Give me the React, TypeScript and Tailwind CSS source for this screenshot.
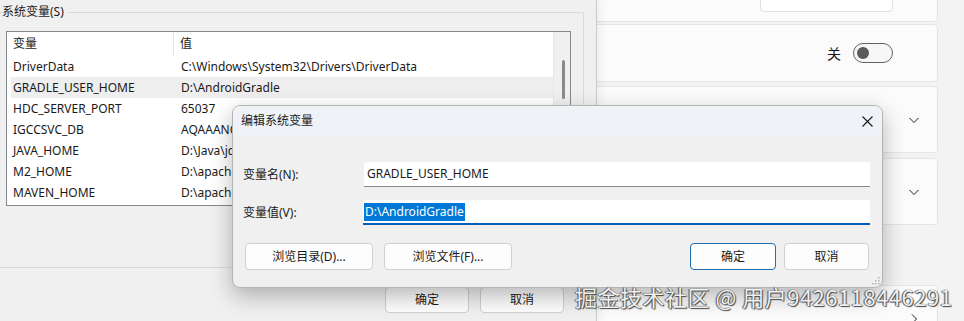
import React from 'react';

const rows = [
  { name: 'DriverData', value: 'C:\\Windows\\System32\\Drivers\\DriverData' },
  { name: 'GRADLE_USER_HOME', value: 'D:\\AndroidGradle', selected: true },
  { name: 'HDC_SERVER_PORT', value: '65037' },
  { name: 'IGCCSVC_DB', value: 'AQAAANCMnd8BFdERjHoAwE/Cl+sBAAAA' },
  { name: 'JAVA_HOME', value: 'D:\\Java\\jdk-17' },
  { name: 'M2_HOME', value: 'D:\\apache-maven-3.9.6' },
  { name: 'MAVEN_HOME', value: 'D:\\apache-maven-3.9.6' },
];

const Chevron: React.FC<{ dir?: 'down' | 'right' }> = ({ dir = 'down' }) => (
  <svg width="12" height="12" viewBox="0 0 12 12" fill="none" stroke="#1f1f1f" strokeWidth="1">
    {dir === 'down' ? <path d="M1.5 4 L6 8.5 L10.5 4" /> : <path d="M4 1.5 L8.5 6 L4 10.5" />}
  </svg>
);

// left: 环境变量 window (system variables group)
const EnvWindow: React.FC = () => (
  <div className="relative z-10 w-[597px] shrink-0 h-full bg-[#f0f0f0] border-r border-[#c9c9c9] shadow-[3px_0_8px_rgba(0,0,0,0.06)] flex flex-col">
    <fieldset className="ml-[-8px] mt-[4px] w-[592px] h-[264px] border-t border-r border-b border-[#dadada]">
      <legend className="ml-[10px] pr-[4px] leading-[16px] text-[#1a1a1a]">系统变量(S)</legend>
      <div className="mt-[11px] ml-[14px] w-[565px] h-[175px] border border-[#828790] bg-white flex">
        <div className="flex-1 flex flex-col">
          <div className="h-[24px] flex shrink-0">
            <div className="w-[167px] border-r border-[#e5e5e5] pl-[6px] flex items-center">变量</div>
            <div className="flex-1 pl-[6px] flex items-center">值</div>
          </div>
          {rows.map((r) => (
            <div
              key={r.name}
              className={`h-[21px] ml-[4px] flex items-center shrink-0 whitespace-nowrap overflow-hidden ${r.selected ? 'bg-[#eeeeee]' : ''}`}
            >
              <div className="w-[163px] pl-[2px] shrink-0">{r.name}</div>
              <div className="pl-[7px]">{r.value}</div>
            </div>
          ))}
        </div>
        <div className="w-[17px] bg-[#f0f0f0] border-l border-[#e8e8e8] pt-[28px] pl-[8px]">
          <div className="w-[3px] h-[39px] rounded-full bg-[#8a8a8a]" />
        </div>
      </div>
    </fieldset>
    <div className="mt-[19px] flex justify-end gap-[11px] pr-[32px]">
      <button className="w-[84px] h-[26px] rounded-[4px] border border-[#d0d0d0] bg-[#fdfdfd]">确定</button>
      <button className="w-[84px] h-[26px] rounded-[4px] border border-[#d0d0d0] bg-[#fdfdfd]">取消</button>
    </div>
  </div>
);

// right: settings app cards
const SettingsPane: React.FC = () => (
  <div className="flex-1 ml-[-12px] pr-[26px] flex flex-col text-[14px] text-[#1a1a1a]">
    <div className="mt-[-40px] h-[62px] shrink-0 rounded-[4px] border border-[#e5e5e5] bg-[#fbfbfb] flex items-start justify-end pr-[44px] pt-[19px]">
      <button className="w-[133px] h-[32px] rounded-[4px] border border-[#e0e0e0] bg-white text-[13px] flex items-start justify-center pt-[3px]">编辑环境变量</button>
    </div>
    <div className="mt-[2px] h-[58px] shrink-0 rounded-[4px] border border-[#e5e5e5] bg-[#fbfbfb] flex items-center justify-end pr-[44px] gap-[12px]">
      <span>关</span>
      <div className="w-[40px] h-[20px] rounded-full border border-[#616161] bg-[#f6f6f6] flex items-center pl-[3px]">
        <div className="w-[12px] h-[12px] rounded-full bg-[#5a5a5a]" />
      </div>
    </div>
    <div className="mt-[4px] h-[67px] shrink-0 rounded-[4px] border border-[#e5e5e5] bg-[#fbfbfb] flex items-center justify-end pr-[17px]">
      <Chevron />
    </div>
    <div className="mt-[5px] h-[67px] shrink-0 rounded-[4px] border border-[#e5e5e5] bg-[#fbfbfb] flex items-center justify-end pr-[17px]">
      <Chevron />
    </div>
    <div className="mt-[60px] h-[67px] shrink-0 rounded-[4px] border border-[#e5e5e5] bg-[#fbfbfb] flex items-center justify-end pr-[17px]">
      <Chevron dir="right" />
    </div>
  </div>
);

const EditDialog: React.FC = () => (
  <div className="absolute z-20 left-[232px] top-[105px] w-[651px] h-[183px] rounded-[8px] border border-[#b4b4b4] bg-[#f0f0f0] overflow-hidden shadow-[0_8px_22px_rgba(0,0,0,0.28)] flex flex-col">
    <div className="h-[30px] shrink-0 bg-[#eff3f8] flex items-center justify-between pl-[8px] pr-[9px]">
      <span>编辑系统变量</span>
      <svg width="11" height="11" viewBox="0 0 11 11" stroke="#1a1a1a" strokeWidth="1.1">
        <path d="M0.5 0.5 L10.5 10.5 M10.5 0.5 L0.5 10.5" />
      </svg>
    </div>
    <div className="flex-1 flex flex-col pt-[26px]">
      <div className="flex items-center pl-[10px]">
        <span className="w-[121px]">变量名(N):</span>
        <div className="w-[506px] h-[25px] bg-white border-b border-[#8a8a8a] rounded-t-[3px] flex items-center pl-[3px]">
          GRADLE_USER_HOME
        </div>
      </div>
      <div className="mt-[13px] flex items-center pl-[10px]">
        <span className="w-[120px]">变量值(V):</span>
        <div className="w-[507px] h-[25px] bg-white border-b-2 border-[#005fb8] rounded-t-[3px] flex items-center pl-[1px]">
          <span className="bg-[#0078d7] text-white px-[1px] leading-[18px]">D:\AndroidGradle</span>
        </div>
      </div>
      <div className="mt-[18px] flex items-center pl-[12px] pr-[13px] gap-[11px]">
        <button className="w-[128px] h-[27px] rounded-[4px] border border-[#d0d0d0] bg-[#fdfdfd]">浏览目录(D)...</button>
        <button className="w-[128px] h-[27px] rounded-[4px] border border-[#d0d0d0] bg-[#fdfdfd]">浏览文件(F)...</button>
        <button className="ml-auto w-[86px] h-[27px] rounded-[4px] border border-[#1f6fb2] bg-[#fdfdfd]">确定</button>
        <button className="ml-[-3px] w-[85px] h-[27px] rounded-[4px] border border-[#d0d0d0] bg-[#fdfdfd]">取消</button>
      </div>
    </div>
    <svg className="absolute right-[2px] bottom-[2px]" width="9" height="9" viewBox="0 0 9 9" fill="#b0b0b0">
      <rect x="7" y="1" width="1.5" height="1.5" />
      <rect x="4" y="4" width="1.5" height="1.5" />
      <rect x="7" y="4" width="1.5" height="1.5" />
      <rect x="1" y="7" width="1.5" height="1.5" />
      <rect x="4" y="7" width="1.5" height="1.5" />
      <rect x="7" y="7" width="1.5" height="1.5" />
    </svg>
  </div>
);

export default function App() {
  return (
    <div className="relative w-[964px] h-[321px] overflow-hidden flex bg-[#f3f3f3] text-[12px] text-[#1a1a1a] font-['Noto_Sans','Noto_Sans_CJK_SC',sans-serif]">
      <EnvWindow />
      <SettingsPane />
      <EditDialog />
      <div className="absolute z-30 left-[575px] top-[280px] whitespace-nowrap text-[22px] leading-[32px] tracking-[0.5px] text-[#f0f0f0] font-['Noto_Sans_CJK_SC',sans-serif] [text-shadow:0_0_1px_#3a3a3a,1px_1px_1px_#4a4a4a,-1px_0_1px_#5a5a5a]">
        掘金技术社区 @ 用户9426118446291
      </div>
    </div>
  );
}
